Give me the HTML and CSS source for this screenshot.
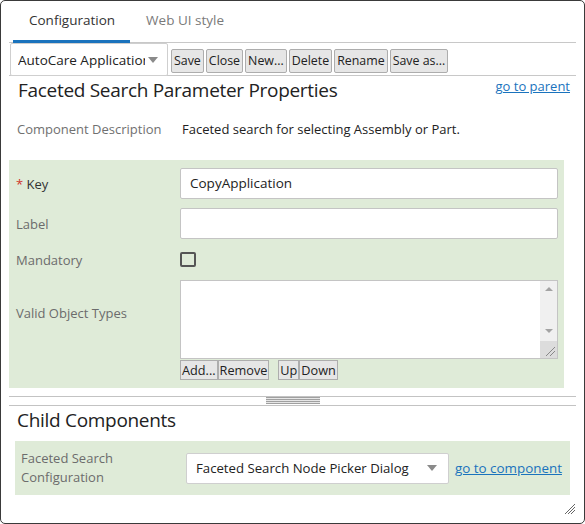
FILE: index.html
```html
<!DOCTYPE html>
<html>
<head>
<meta charset="utf-8">
<link rel="stylesheet" href="styles.css">
</head>
<body>
<div class="frame">
  <div class="tabs">
    <div class="tab active">Configuration</div>
    <div class="tab">Web UI style</div>
  </div>
  <div class="toolbar">
    <div class="combo">
      <span class="combo-text">AutoCare Application</span>
      <span class="caret"></span>
    </div>
    <div class="btns">
      <button class="btn">Save</button>
      <button class="btn">Close</button>
      <button class="btn">New...</button>
      <button class="btn">Delete</button>
      <button class="btn">Rename</button>
      <button class="btn">Save as...</button>
    </div>
  </div>
  <div class="head">
    <h1 class="title">Faceted Search Parameter Properties</h1>
    <a class="link parent-link" href="#">go to parent</a>
  </div>
  <div class="desc">
    <span class="desc-label">Component Description</span>
    <span class="desc-value">Faceted search for selecting Assembly or Part.</span>
  </div>
  <div class="panel">
    <div class="row">
      <div class="label req"><span class="star">*</span> Key</div>
      <div class="field"><div class="input">CopyApplication</div></div>
    </div>
    <div class="row">
      <div class="label">Label</div>
      <div class="field"><div class="input"></div></div>
    </div>
    <div class="row row-check">
      <div class="label">Mandatory</div>
      <div class="field"><span class="checkbox"></span></div>
    </div>
    <div class="row row-list">
      <div class="label label-list">Valid Object Types</div>
      <div class="field">
        <div class="textarea">
          <div class="ta-body"></div>
          <div class="scrollbar">
            <span class="sb-up"></span>
            <span class="sb-down"></span>
            <span class="sb-corner">
              <svg width="17" height="17" viewBox="0 0 17 17"><path d="M6 15 L15 6 M10 15 L15 10" stroke="#888" stroke-width="1"/></svg>
            </span>
          </div>
        </div>
        <div class="list-btns">
          <button class="btn sm">Add...</button><button class="btn sm">Remove</button>
          <span class="spacer"></span>
          <button class="btn sm">Up</button><button class="btn sm">Down</button>
        </div>
      </div>
    </div>
  </div>
  <div class="splitter"><span class="grip"></span></div>
  <h2 class="title sub">Child Components</h2>
  <div class="panel2">
    <div class="label2">Faceted Search<br>Configuration</div>
    <div class="combo combo2">
      <span class="combo-text">Faceted Search Node Picker Dialog</span>
      <span class="caret"></span>
    </div>
    <a class="link" href="#">go to component</a>
  </div>
  <svg class="resize" width="12" height="12" viewBox="0 0 12 12">
    <path d="M1 11 L11 1 M4 11 L11 4 M7 11 L11 7" stroke="#666" stroke-width="1"/>
  </svg>
</div>
</body>
</html>
```
FILE: styles.css
```css
* { box-sizing: border-box; }
html, body { margin: 0; padding: 0; background: #fff; }
body {
  font-family: "Open Sans", "Noto Sans", sans-serif;
  font-size: 13px;
  color: #333;
}
.frame {
  position: relative;
  width: 585px;
  height: 524px;
  border: 1px solid #3a3a3a;
  border-radius: 5px;
  padding: 0 8px;
  overflow: hidden;
}
.tabs {
  display: flex;
  height: 42px;
  padding-left: 4px;
  border-bottom: 1px solid #c8c8c8;
}
.tab {
  height: 42px;
  margin-bottom: -1px;
  padding: 0 15px 0 16px;
  font-size: 13.5px;
  line-height: 39px;
  color: #7a7a7a;
  border-bottom: 3px solid transparent;
}
.tab.active {
  color: #333;
  border-bottom-color: #1a73bd;
}
.toolbar {
  display: flex;
  align-items: center;
  height: 33px;
  padding-left: 1px;
  border-bottom: 1px solid #c8c8c8;
}
.combo {
  display: flex;
  align-items: center;
  height: 33px;
  width: 158px;
  border: 1px solid #cfcfcf;
  border-radius: 2px;
  background: #fff;
  padding: 0 9px 0 7px;
  margin-top: 1px;
  font-size: 13.5px;
  color: #222;
}
.combo-text {
  flex: 1;
  overflow: hidden;
  white-space: nowrap;
}
.caret {
  width: 0;
  height: 0;
  border-left: 5px solid transparent;
  border-right: 5px solid transparent;
  border-top: 6px solid #8a8a8a;
  margin-left: 3px;
}
.btns {
  display: flex;
  gap: 2px;
  margin-left: 3px;
  margin-top: 3px;
}
.btn {
  font-family: "Open Sans", "Noto Sans", sans-serif;
  font-size: 12.4px;
  color: #222;
  height: 24px;
  padding: 0 2px;
  background: #e6e6e6;
  border: 1px solid #adadad;
  border-radius: 2px;
  line-height: 20px;
}
.head {
  display: flex;
  justify-content: space-between;
  align-items: flex-start;
  margin-top: 1px;
  padding-left: 9px;
  padding-right: 6px;
}
.title {
  margin: 0;
  font-size: 19px;
  letter-spacing: -0.3px;
  font-weight: normal;
  line-height: 26px;
  color: #222;
}
.link {
  color: #1a73bd;
  text-decoration: underline;
  font-size: 13px;
  line-height: 18px;
}
.desc {
  display: flex;
  margin-top: 17px;
  padding-left: 8px;
  line-height: 18px;
}
.desc-label {
  width: 165px;
  color: #707070;
}
.desc-value { color: #222; }
.panel {
  margin-top: 22px;
  width: 555px;
  background: #dfebd8;
  padding: 8px 6px 8px 7px;
}
.row {
  display: flex;
  align-items: center;
}
.row + .row { margin-top: 9px; }
.row-check { margin-top: 13px !important; height: 15px; }
.row-list { margin-top: 13px !important; align-items: flex-start; }
.label {
  width: 164px;
  color: #6c6c6c;
  line-height: 18px;
}
.label.req { color: #333; }
.star { color: #d0332b; }
.label-list { padding-top: 24px; }
.field { flex: 1; }
.input {
  height: 31px;
  border: 1px solid #c4c4c4;
  border-radius: 2px;
  background: #fff;
  padding: 0 9px;
  line-height: 29px;
  font-size: 13.5px;
  color: #222;
}
.checkbox {
  display: block;
  width: 16px;
  height: 15px;
  border: 2px solid #555;
  border-radius: 2px;
}
.textarea {
  display: flex;
  height: 79px;
  border: 1px solid #c4c4c4;
  background: #fff;
}
.ta-body { flex: 1; }
.scrollbar {
  position: relative;
  width: 17px;
  background: #f0f0f0;
}
.sb-up, .sb-down {
  position: absolute;
  left: 5px;
  width: 0;
  height: 0;
  border-left: 4px solid transparent;
  border-right: 4px solid transparent;
}
.sb-up { top: 6px; border-bottom: 4px solid #a3a3a3; }
.sb-down { top: 48px; border-top: 4px solid #a3a3a3; }
.sb-corner {
  position: absolute;
  left: 0;
  bottom: 0;
  width: 17px;
  height: 17px;
  background: #dcdcdc;
}
.sb-corner svg { display: block; }
.list-btns {
  display: flex;
  margin-top: 1px;
}
.btn.sm {
  height: 20px;
  line-height: 16px;
  padding: 0 1px;
  font-size: 12.7px;
  border-radius: 0;
}
.spacer { width: 9px; }
.splitter {
  position: relative;
  margin-top: 8px;
  height: 10px;
  border-top: 1px solid #c3c3c3;
  border-bottom: 1px solid #c3c3c3;
  display: flex;
  justify-content: center;
}
.grip {
  width: 54px;
  height: 7px;
  background: repeating-linear-gradient(to bottom, #a0a0a0 0, #a0a0a0 1px, #e6e6e6 1px, #e6e6e6 2px);
}
.sub {
  margin-top: 1px;
  padding-left: 8px;
}
.panel2 {
  display: flex;
  align-items: center;
  margin: 8px 0 0 6px;
  width: 555px;
  height: 54px;
  background: #dfebd8;
  padding-left: 6px;
}
.label2 {
  width: 165px;
  line-height: 19px;
  color: #6c6c6c;
}
.combo2 {
  width: 263px;
  height: 31px;
  margin: 0 6px 0 0;
  padding: 0 11px 0 9px;
  font-size: 13.2px;
}
.combo2 .caret { margin-left: 0; }
.panel2 .link { font-size: 13.4px; }
.resize {
  position: absolute;
  right: 8px;
  bottom: 8px;
}
```
